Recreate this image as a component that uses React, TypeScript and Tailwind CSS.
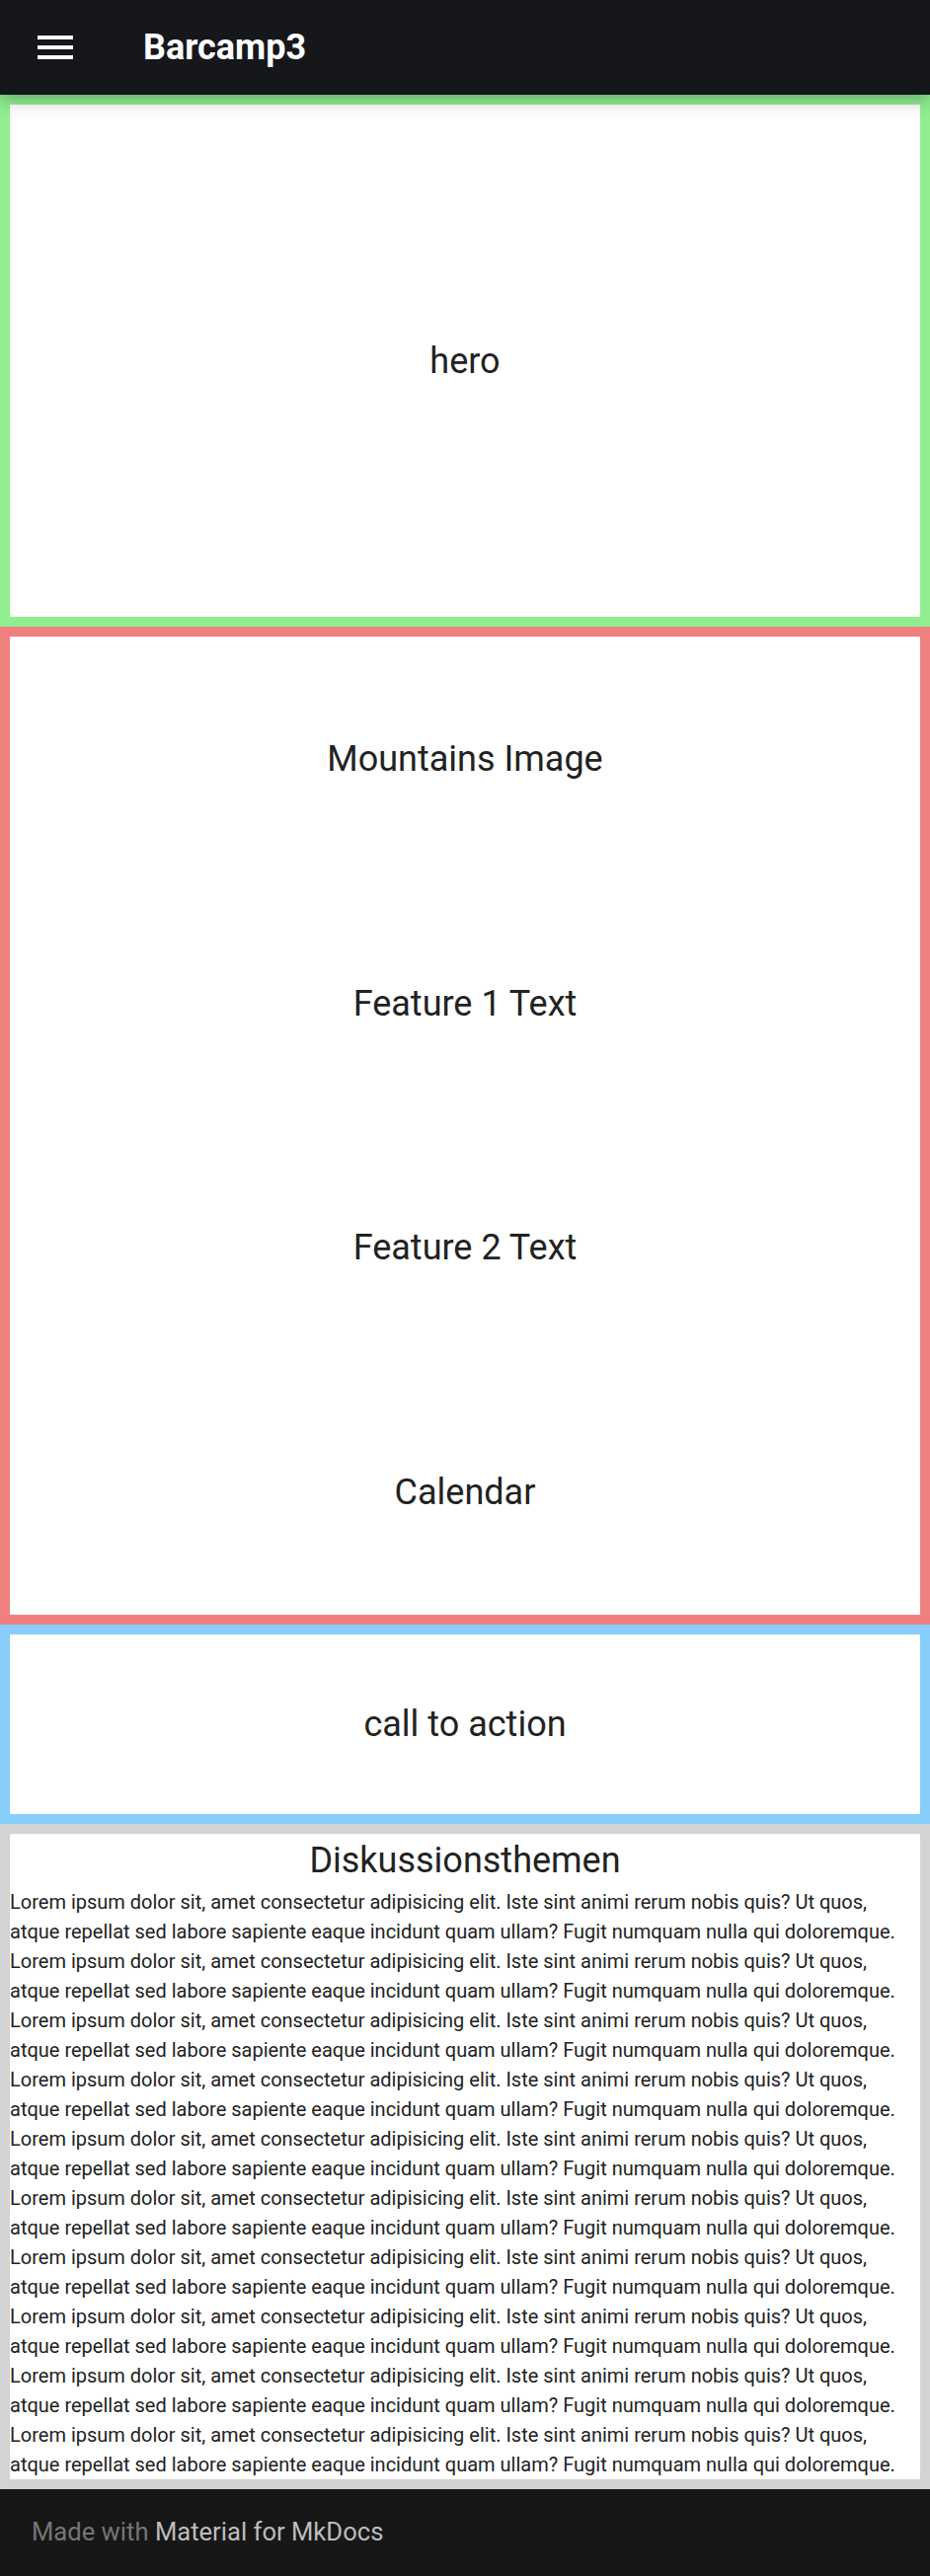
import React from "react";

const LOREM =
  "Lorem ipsum dolor sit, amet consectetur adipisicing elit. Iste sint animi rerum nobis quis? Ut quos, atque repellat sed labore sapiente eaque incidunt quam ullam? Fugit numquam nulla qui doloremque.";

export default function App() {
  const font = { fontFamily: "Roboto, 'Noto Sans', 'Liberation Sans', sans-serif" };
  return (
    <div style={font} className="w-[942px] bg-white text-[#222222]">
      <header className="relative z-10 flex h-[96px] items-center bg-[#16171b] shadow-[0_0_8px_rgba(0,0,0,0.1),0_8px_16px_rgba(0,0,0,0.2)]">
        <div className="ml-[32px] flex h-[48px] w-[48px] items-center justify-center">
          <svg viewBox="0 0 24 24" width="48" height="48" fill="#ffffff">
            <path d="M3 6h18v2H3V6m0 5h18v2H3v-2m0 5h18v2H3v-2Z" />
          </svg>
        </div>
        <div className="ml-[65px] text-[36px] font-bold leading-none text-white">Barcamp3</div>
      </header>

      <main>
        <section className="border-[10px] border-[#90ee90]">
          <div className="flex h-[519px] items-center justify-center text-[36px] leading-[54px]">hero</div>
        </section>

        <section className="border-[10px] border-[#f08080]">
          <div className="grid h-[991px] grid-rows-4">
            <div className="flex items-center justify-center text-[36px] leading-[54px]">Mountains Image</div>
            <div className="flex items-center justify-center text-[36px] leading-[54px]">Feature 1 Text</div>
            <div className="flex items-center justify-center text-[36px] leading-[54px]">Feature 2 Text</div>
            <div className="flex items-center justify-center text-[36px] leading-[54px]">Calendar</div>
          </div>
        </section>

        <section className="border-[10px] border-[#87cefa]">
          <div className="flex h-[182px] items-center justify-center text-[36px] leading-[54px]">call to action</div>
        </section>

        <section className="border-[10px] border-[#d3d3d3]">
          <h2 className="text-center text-[36px] font-normal leading-[54px]">Diskussionsthemen</h2>
          <p className="text-[20px] leading-[30px]">
            {Array.from({ length: 10 }, () => LOREM).join(" ")}
          </p>
        </section>
      </main>

      <footer className="flex h-[88px] items-center bg-[#171717] px-[32px] text-[25.6px] leading-none">
        <span className="text-[#757575]">Made with&nbsp;</span>
        <span className="text-[#bdbdbd]">Material for MkDocs</span>
      </footer>
    </div>
  );
}
